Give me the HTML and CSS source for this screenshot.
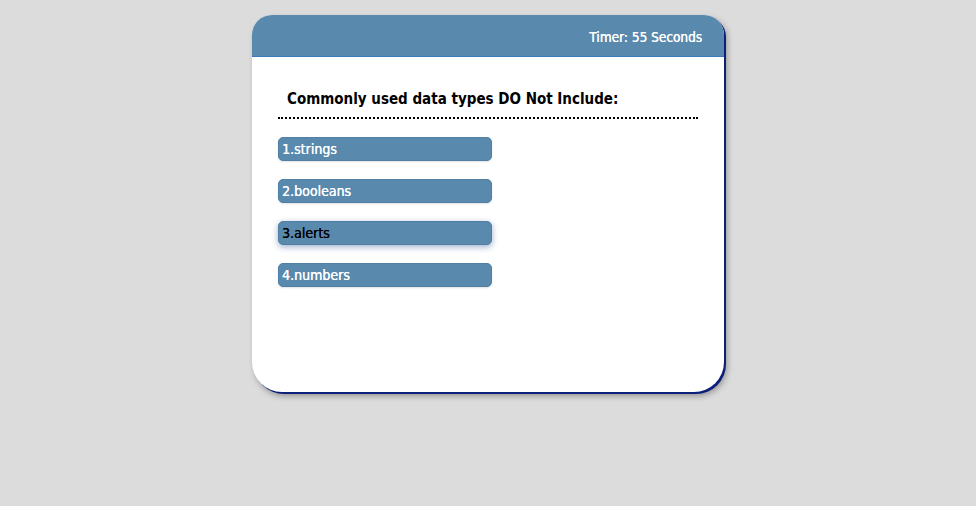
FILE: index.html
```html
<!DOCTYPE html>
<html>
<head>
<meta charset="utf-8">
<link rel="stylesheet" href="styles.css">
</head>
<body>
<main class="card">
  <header class="card-header">
    <span class="timer">Timer: 55 Seconds</span>
  </header>
  <section class="card-body">
    <h1 class="question">Commonly used data types DO Not Include:</h1>
    <ul class="answers">
      <li><button class="answer">1.strings</button></li>
      <li><button class="answer">2.booleans</button></li>
      <li><button class="answer answer-hover">3.alerts</button></li>
      <li><button class="answer">4.numbers</button></li>
    </ul>
  </section>
</main>
</body>
</html>
```
FILE: styles.css
```css
html, body {
  margin: 0;
  padding: 0;
}
body {
  background: #dcdcdc;
  font-family: "DejaVu Sans Condensed", "DejaVu Sans", sans-serif;
  padding-top: 15px;
  height: 506px;
  box-sizing: border-box;
}
.card {
  width: 472px;
  height: 377px;
  margin: 0 auto;
  background: #fff;
  border-radius: 20px 20px 30px 30px;
  box-shadow: 2px 2px 0 #0b1f7a, 3px 4px 6px rgba(0,0,0,0.35);
  overflow: hidden;
  display: flex;
  flex-direction: column;
}
.card-header {
  background: #5a89ae;
  height: 41px;
  border-bottom: 1px solid #3b7cbc;
  display: flex;
  align-items: center;
  justify-content: flex-end;
  padding-right: 22px;
}
.timer {
  color: #fff;
  font-weight: normal;
  font-size: 13.5px;
  margin-top: 3px;
  text-shadow: 0.35px 0 0 #fff;
}
.card-body {
  padding: 33px 26px 0 26px;
}
.question {
  margin: 0 0 0 9px;
  font-size: 15px;
  font-weight: bold;
  color: #000;
}
.answers {
  list-style: none;
  margin: 0;
  padding: 0;
  border-top: 2px dotted #000;
  margin-top: 9px;
  padding-top: 18px;
  display: flex;
  flex-direction: column;
  gap: 18px;
}
.answer {
  display: block;
  width: 214px;
  height: 24px;
  background: #5a89ae;
  border: 1px solid #4f7fa4;
  border-radius: 5px;
  color: #fff;
  font-family: inherit;
  font-size: 14px;
  font-weight: normal;
  text-align: left;
  padding: 0 3px;
  text-shadow: 0.3px 0 0 currentColor;
  box-shadow: 0 1px 2px rgba(0,0,0,0.12);
}
.answer-hover {
  color: #000;
  box-shadow: 0 2px 6px rgba(40,80,140,0.45);
}
```
